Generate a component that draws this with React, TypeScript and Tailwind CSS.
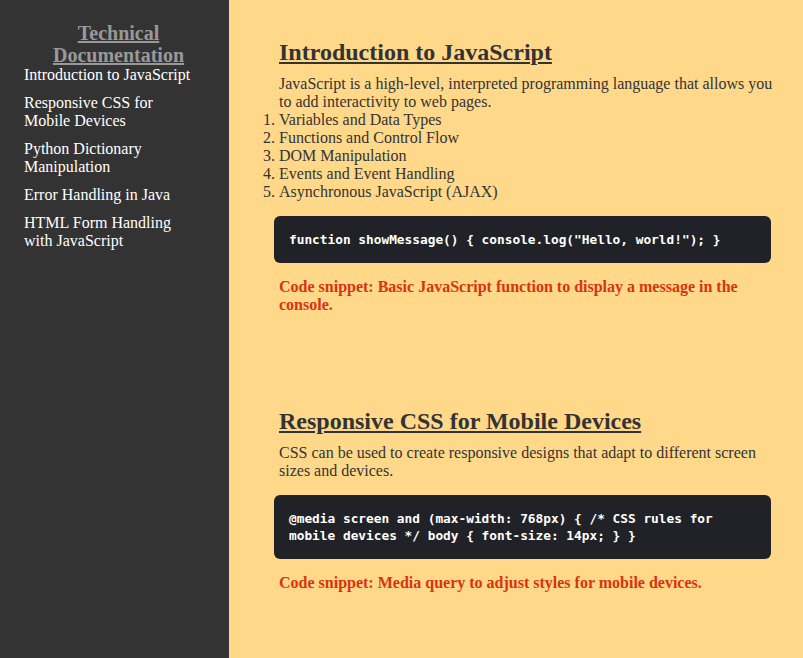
import React from 'react';

interface Topic {
  title: string;
  text: string;
  list?: string[];
  code: string;
  caption: string;
}

const navItems = [
  'Introduction to JavaScript',
  'Responsive CSS for Mobile Devices',
  'Python Dictionary Manipulation',
  'Error Handling in Java',
  'HTML Form Handling with JavaScript',
];

const topics: Topic[] = [
  {
    title: 'Introduction to JavaScript',
    text: 'JavaScript is a high-level, interpreted programming language that allows you to add interactivity to web pages.',
    list: [
      'Variables and Data Types',
      'Functions and Control Flow',
      'DOM Manipulation',
      'Events and Event Handling',
      'Asynchronous JavaScript (AJAX)',
    ],
    code: 'function showMessage() { console.log("Hello, world!"); }',
    caption: 'Code snippet: Basic JavaScript function to display a message in the console.',
  },
  {
    title: 'Responsive CSS for Mobile Devices',
    text: 'CSS can be used to create responsive designs that adapt to different screen sizes and devices.',
    code: '@media screen and (max-width: 768px) { /* CSS rules for mobile devices */ body { font-size: 14px; } }',
    caption: 'Code snippet: Media query to adjust styles for mobile devices.',
  },
];

const App = () => {
  return (
    <div className="flex min-h-[658px] font-['Liberation_Serif',serif]">
      <aside className="w-[229px] shrink-0 bg-[#333333] pl-[24px] pr-[16px] pt-[22px]">
        <h1 className="text-center text-[20px] font-bold leading-[22px] text-[#999999] underline">
          Technical Documentation
        </h1>
        <ul className="flex w-[172px] flex-col gap-[10px]">
          {navItems.map((item) => (
            <li key={item} className="text-[16px] leading-[18px] text-white">
              <a href="#">{item}</a>
            </li>
          ))}
        </ul>
      </aside>

      <main className="flex-1 bg-[#ffd88a] pl-[50px] pr-[27px] pt-[38px] text-[#333333]">
        {topics.map((topic) => (
          <section key={topic.title} className="mb-[93px]">
            <h2 className="text-[24px] font-bold leading-[28px] underline">
              {topic.title}
            </h2>
            <p className="mt-[9px] text-[16px] leading-[18px]">{topic.text}</p>
            {topic.list && (
              <ol className="list-decimal text-[16px] leading-[18px]">
                {topic.list.map((li) => (
                  <li key={li}>{li}</li>
                ))}
              </ol>
            )}
            <pre className="-ml-[5px] mr-[5px] mt-[15px] whitespace-pre-wrap rounded-[6px] bg-[#212227] px-[15px] py-[15px] font-['DejaVu_Sans_Mono',monospace] text-[12.8px] font-bold leading-[17px] text-white">
              {topic.code}
            </pre>
            <p className="mt-[15px] text-[16px] font-bold leading-[18px] text-[#d8340e]">
              {topic.caption}
            </p>
          </section>
        ))}
      </main>
    </div>
  );
};

export default App;
